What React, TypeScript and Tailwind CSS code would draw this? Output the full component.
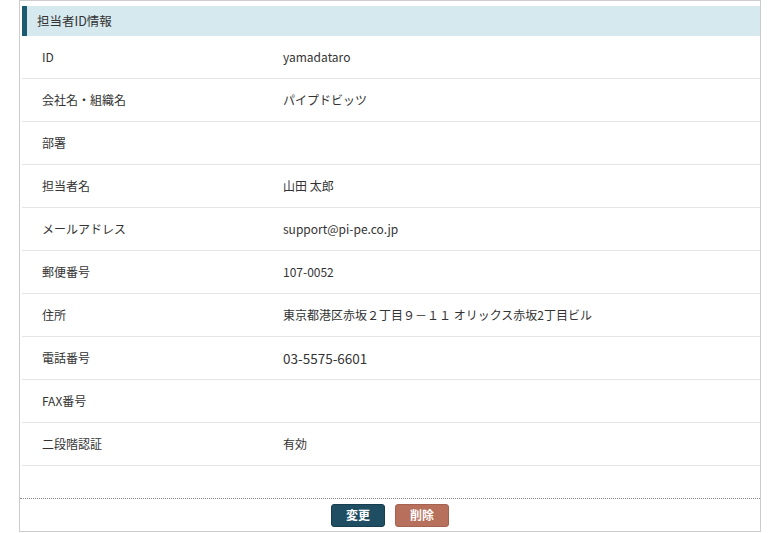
import React from "react";

const rows: { label: string; value: string; big?: boolean }[] = [
  { label: "ID", value: "yamadataro" },
  { label: "会社名・組織名", value: "パイプドビッツ" },
  { label: "部署", value: "" },
  { label: "担当者名", value: "山田 太郎" },
  { label: "メールアドレス", value: "support@pi-pe.co.jp" },
  { label: "郵便番号", value: "107-0052" },
  { label: "住所", value: "東京都港区赤坂２丁目９－１１ オリックス赤坂2丁目ビル" },
  { label: "電話番号", value: "03-5575-6601", big: true },
  { label: "FAX番号", value: "" },
  { label: "二段階認証", value: "有効" },
];

export default function App() {
  return (
    <div
      className="w-[780px] h-[533px] bg-white text-[#333]"
      style={{ fontFamily: '"Noto Sans CJK JP", "Noto Sans", sans-serif' }}
    >
      <div className="ml-[19px] w-[742px] border border-[#cccccc] flex flex-col">
        <div className="pt-[5px] pl-[2px]">
          <div className="h-[30px] bg-[#d6e9ef] border-l-[5px] border-[#1c5a72] flex items-center pl-[10px] text-[12.5px] text-[#333]">
            担当者ID情報
          </div>
          {rows.map((r) => (
            <div
              key={r.label}
              className="h-[43px] border-b border-[#e6e6e6] flex items-center text-[12px]"
            >
              <div className="w-[261px] pl-[20px] shrink-0">{r.label}</div>
              <div className={r.big ? "text-[13.5px]" : ""}>{r.value}</div>
            </div>
          ))}
        </div>
        <div className="h-[32px]" />
        <div className="border-t border-dotted border-[#888]" />
        <div className="h-[32px] flex items-center justify-center gap-[10px]">
          <button className="w-[54px] h-[23px] rounded-[3px] bg-[#1f4e63] border border-[#173e4f] text-white text-[12px] font-bold flex items-center justify-center">
            変更
          </button>
          <button className="w-[54px] h-[23px] rounded-[3px] bg-[#b6705b] border border-[#a5634f] text-white text-[12px] font-bold flex items-center justify-center">
            削除
          </button>
        </div>
      </div>
    </div>
  );
}
